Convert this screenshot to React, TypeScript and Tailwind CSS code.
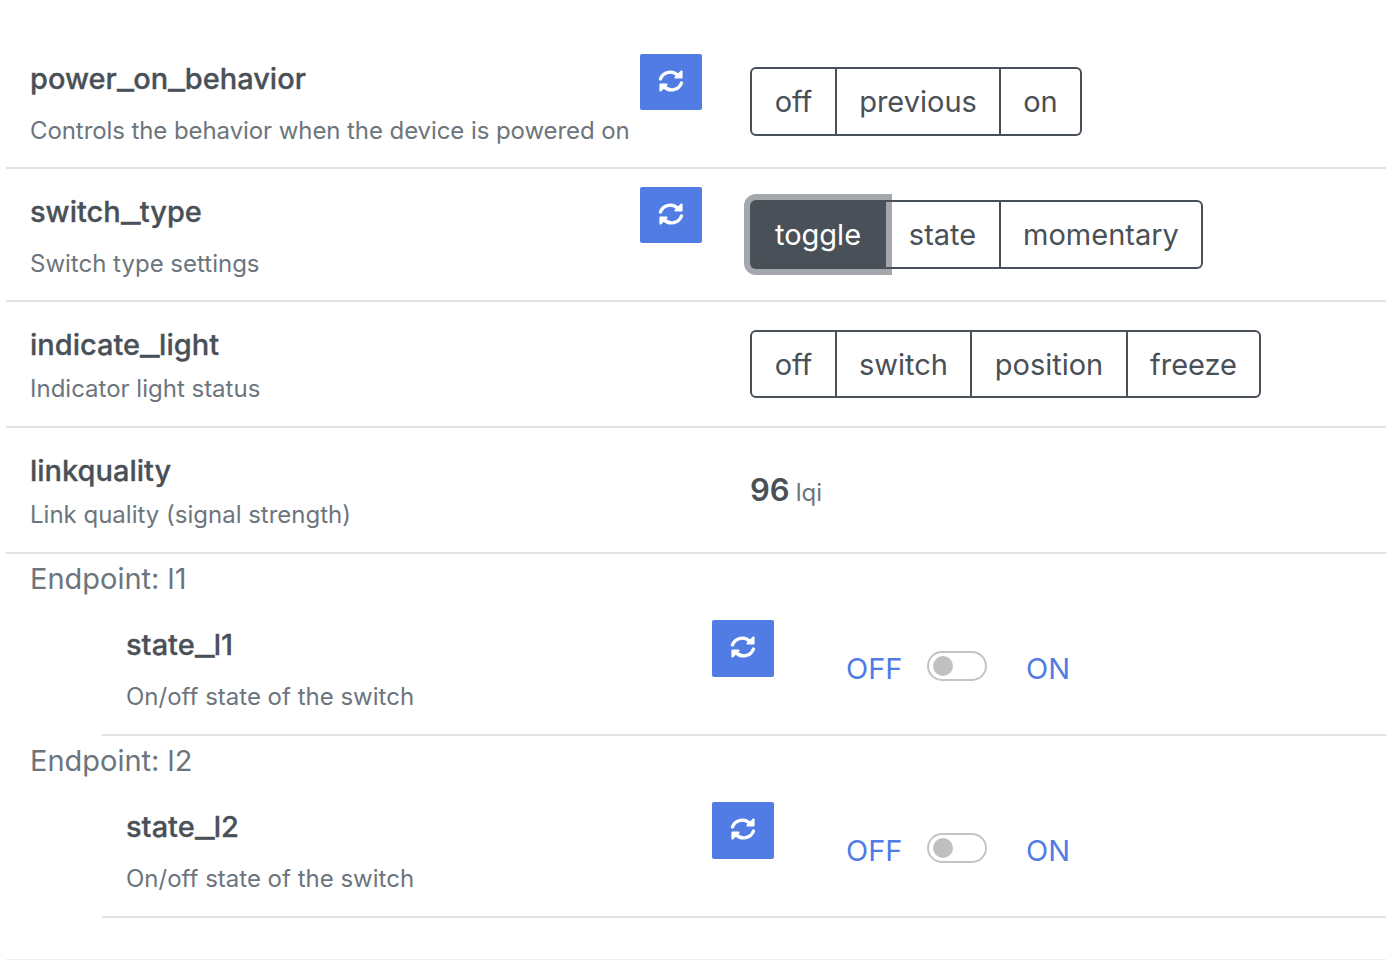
const font = { fontFamily: 'Inter, sans-serif' }

function SyncIcon() {
  return (
    <svg viewBox="0 0 26 24" className="w-[26px] h-[24px] mb-[3px]" fill="none" stroke="currentColor" strokeWidth="3.4" strokeLinecap="round" strokeLinejoin="round">
      <path d="M2.5 10A10.5 10.5 0 0 1 20 6.5" />
      <path d="M23.5 2.5V8.5H17.5Z" fill="currentColor" strokeWidth="2.2" />
      <path d="M23.5 14A10.5 10.5 0 0 1 6 17.5" />
      <path d="M2.5 21.5V15.5H8.5Z" fill="currentColor" strokeWidth="2.2" />
    </svg>
  )
}

function RefreshButton({ tall }: { tall?: boolean }) {
  return (
    <button className={`w-[62px] ${tall ? 'h-[57px]' : 'h-[56px]'} bg-[#507ce4] rounded-[2px] flex items-center justify-center text-white shrink-0`}>
      <SyncIcon />
    </button>
  )
}

function Segments({ items, active, height }: { items: { label: string; width: string }[]; active?: string; height: string }) {
  return (
    <div className={`flex ${height} text-[#495057] text-[29px]`}>
      {items.map((item, i) => {
        const isActive = item.label === active
        return (
          <div
            key={item.label}
            className={`flex items-center justify-center pt-[1px] border-y-2 border-[#495057] ${item.width} ${i === 0 ? 'border-l-2 rounded-l-[6px]' : ''} ${i === items.length - 1 ? 'rounded-r-[6px]' : ''} ${isActive ? 'bg-[#495057] text-white pr-[2px] shadow-[0_0_0_6px_#a4a7ab]' : 'border-r-2'}`}
          >
            {item.label}
          </div>
        )
      })}
    </div>
  )
}

// the reference's underscore runs wider than Inter's here, so it gets stretched
function Title({ name, desc, wide, tight }: { name: string; desc: string; wide?: boolean; tight?: boolean }) {
  const [head, ...rest] = name.split('_')
  return (
    <>
      <div className="text-[#495057] text-[29px] font-medium leading-[36px] [-webkit-text-stroke:0.3px]">
        {head}
        {rest.map((part) => (
          <span key={part}>
            <span className={`inline-block origin-left ${rest.length > 1 ? 'w-[16.5px] scale-x-[1.27]' : 'w-[19px] scale-x-[1.46]'}`}>_</span>
            {part}
          </span>
        ))}
      </div>
      <div className={`text-[#6c757d] text-[24px] leading-[32px] ${wide ? 'mt-[18px]' : 'mt-[10px]'} ${tight ? 'tracking-[-0.08px]' : ''}`}>{desc}</div>
    </>
  )
}

function Toggle() {
  return (
    <div className="flex items-center text-[#507ce4] text-[29px] leading-[36px]">
      <span className="w-[81px]">OFF</span>
      <span className="w-[60px] h-[30px] -mt-[6px] rounded-full border-2 border-[#c4c4c4] flex items-center pl-[4px]">
        <span className="w-[20px] h-[20px] rounded-full bg-[#c0c0c0]" />
      </span>
      <span className="ml-[39px]">ON</span>
    </div>
  )
}

export default function App() {
  return (
    <div className="w-[1386px] h-[960px] bg-white overflow-hidden pt-[35px] pl-[6px]" style={font}>
      {/* power_on_behavior */}
      <div className="flex h-[134px] border-b-2 border-[#dee2e6] pl-[24px] pt-[19px]">
        <div className="w-[610px] pt-[7px]">
          <Title name="power_on_behavior" desc="Controls the behavior when the device is powered on" wide tight />
        </div>
        <RefreshButton />
        <div className="ml-[48px] pt-[13px]">
          <Segments height="h-[69px]" items={[{ label: 'off', width: 'w-[87px]' }, { label: 'previous', width: 'w-[164px]' }, { label: 'on', width: 'w-[81px]' }]} />
        </div>
      </div>

      {/* switch_type */}
      <div className="flex h-[133px] border-b-2 border-[#dee2e6] pl-[24px] pt-[18px]">
        <div className="w-[610px] pt-[7px]">
          <Title name="switch_type" desc="Switch type settings" wide />
        </div>
        <RefreshButton />
        <div className="ml-[48px] pt-[13px]">
          <Segments height="h-[69px]" items={[{ label: 'toggle', width: 'w-[136px]' }, { label: 'state', width: 'w-[115px]' }, { label: 'momentary', width: 'w-[202px]' }]} active="toggle" />
        </div>
      </div>

      {/* indicate_light */}
      <div className="flex h-[126px] border-b-2 border-[#dee2e6] pl-[24px]">
        <div className="w-[720px] pt-[25px]">
          <Title name="indicate_light" desc="Indicator light status" />
        </div>
        <div className="pt-[28px]">
          <Segments height="h-[68px]" items={[{ label: 'off', width: 'w-[87px]' }, { label: 'switch', width: 'w-[135px]' }, { label: 'position', width: 'w-[156px]' }, { label: 'freeze', width: 'w-[133px]' }]} />
        </div>
      </div>

      {/* linkquality */}
      <div className="flex h-[126px] border-b-2 border-[#dee2e6] pl-[24px]">
        <div className="w-[720px] pt-[25px]">
          <Title name="linkquality" desc="Link quality (signal strength)" />
        </div>
        <div className="pt-[44px] text-[#495057] leading-[36px] flex items-baseline">
          <span className="text-[31px] font-semibold">96</span>
          <span className="text-[24px] text-[#6c757d] ml-[6px]">lqi</span>
        </div>
      </div>

      {[1, 2].map((n) => (
        <div key={n}>
          <div className="pl-[24px] h-[50px] text-[#6c757d] text-[29px] leading-[50px]">Endpoint: l{n}</div>
          <div className="flex h-[132px] ml-[96px] border-b-2 border-[#dee2e6] pl-[24px] pt-[16px]">
            <div className="w-[586px] pt-[7px]">
              <Title name={`state_l${n}`} desc="On/off state of the switch" wide />
            </div>
            <RefreshButton tall />
            <div className="ml-[72px] pt-[31px]">
              <Toggle />
            </div>
          </div>
        </div>
      ))}

      <div className="mt-[41px] border-b-2 border-[#eef0f2]" />
    </div>
  )
}
